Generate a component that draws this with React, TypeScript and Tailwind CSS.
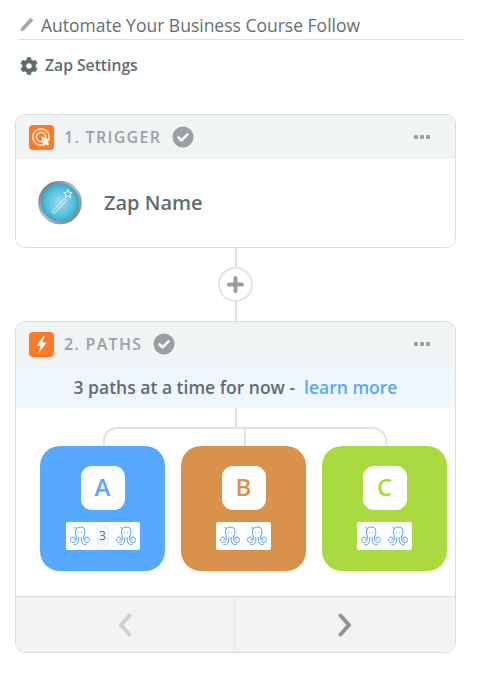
import React from 'react';
import { FaCog } from 'react-icons/fa';

const font = "font-['Open_Sans',sans-serif]";

function CheckBadge() {
  return (
    <svg width="22" height="22" viewBox="0 0 22 22" className="ml-[11px]">
      <circle cx="11" cy="11" r="10.5" fill="#9a9fa2" />
      <path d="M6.5 11.5l3 2.8 6-6" fill="none" stroke="#fff" strokeWidth="2.6" strokeLinecap="round" strokeLinejoin="round" />
    </svg>
  );
}

function Dots() {
  return (
    <div className="ml-auto mr-[25px] flex gap-[2px]">
      <span className="h-[4px] w-[4px] rounded-[1px] bg-[#9a9fa2]" />
      <span className="h-[4px] w-[4px] rounded-[1px] bg-[#9a9fa2]" />
      <span className="h-[4px] w-[4px] rounded-[1px] bg-[#9a9fa2]" />
    </div>
  );
}

function TriggerIcon() {
  return (
    <svg width="25" height="25" viewBox="0 0 25 25">
      <rect width="25" height="25" rx="4" fill="#ff7a26" />
      <circle cx="12" cy="12" r="8.2" fill="none" stroke="#ffd9bf" strokeWidth="1.7" />
      <circle cx="12" cy="12" r="4.6" fill="none" stroke="#ffe6d5" strokeWidth="1.7" />
      <path d="M12.2 11.2l8.6 3.6-3.5 1.3 3.2 3.2-1.6 1.6-3.2-3.2-1.3 3.5z" fill="#fff" />
    </svg>
  );
}

function BoltIcon() {
  return (
    <svg width="25" height="25" viewBox="0 0 25 25">
      <rect width="25" height="25" rx="4" fill="#ff7a26" />
      <path d="M14.6 3.8L7.6 14h4l-2.2 7.4L17.6 10.4h-4.2l2.2-6.6z" fill="#fff" />
    </svg>
  );
}

function WandBadge() {
  return (
    <svg width="46" height="46" viewBox="0 0 46 46">
      <defs>
        <radialGradient id="wandFill" cx="50%" cy="50%" r="52%">
          <stop offset="0%" stopColor="#9adfee" />
          <stop offset="65%" stopColor="#55bedb" />
          <stop offset="100%" stopColor="#2a9dc4" />
        </radialGradient>
        <linearGradient id="wandRing" x1="0" y1="0" x2="1" y2="1">
          <stop offset="0%" stopColor="#6a6a6a" />
          <stop offset="50%" stopColor="#c2c2c2" />
          <stop offset="100%" stopColor="#777" />
        </linearGradient>
      </defs>
      <circle cx="23" cy="22.5" r="20.5" fill="url(#wandFill)" stroke="url(#wandRing)" strokeWidth="2.6" />
      <path d="M31 9.5l1.1 3 3.1.3-2.4 2 .8 3.1-2.7-1.7-2.7 1.6.8-3-2.3-2.1 3.1-.2z" fill="none" stroke="#eaf9fd" strokeWidth="1" />
      <path d="M27.5 18.5L15 31.5l2 2 12.5-13z" fill="none" stroke="#eaf9fd" strokeWidth="1" />
    </svg>
  );
}

function Octopus() {
  return (
    <svg width="20" height="20" viewBox="0 0 20 20" fill="none" stroke="#4a9ff5" strokeWidth="1" strokeLinecap="round">
      <path d="M6.2 10.3C5 8.3 5.2 3 7.2 1.8c1.8-1 4.800-1 6.400 0 1.800 1.200 1.600 6.400.2 8.500" />
      <path d="M6.4 2.4L4.8 1.400" />
      <circle cx="8.4" cy="6.600" r=".6" fill="#4a9ff5" stroke="none" />
      <circle cx="11.8" cy="6.600" r=".6" fill="#4a9ff5" stroke="none" />
      <path d="M6.2 10.300c.5 3 0 6.200-2.700 6.200C1.500 16.500.5 15 .5 13.500.5 12 1.700 11 3 11c1.200 0 2 .8 2 1.800 0 .9-.7 1.400-1.400 1.200" />
      <path d="M13.800 10.300c-.5 3 0 6.200 2.700 6.200 2 0 3-1.500 3-3 0-1.500-1.200-2.500-2.500-2.500-1.200 0-2 .8-2 1.800 0 .9.700 1.400 1.400 1.200" />
      <path d="M8.800 11.500c.4 3-.4 5.600-2.200 6.800-1 .6-2.200.6-3 0" />
      <path d="M11.200 11.500c-.4 3 .4 5.600 2.200 6.800 1 .6 2.200.6 3 0" />
    </svg>
  );
}

function PathCard({ letter, bg, text, count }: { letter: string; bg: string; text: string; count?: boolean }) {
  return (
    <div className={`flex h-[125px] w-[125px] shrink-0 flex-col items-center rounded-[20px] pt-[20px] ${bg}`}>
      <div className={`flex h-[44px] w-[44px] items-center justify-center rounded-[11px] bg-white pb-[2px] text-[24px] font-semibold ${text}`}>
        {letter}
      </div>
      <div className="mt-[12px] flex h-[28px] items-center gap-[7px] rounded-[2px] bg-white px-[4px]">
        <Octopus />
        {count && (
          <span className="flex h-[20px] w-[12px] items-center justify-center rounded-[2px] bg-[#f1f4f5] text-[12px] text-[#666e74]">3</span>
        )}
        <Octopus />
      </div>
    </div>
  );
}

function Chevron({ d, color }: { d: string; color: string }) {
  return (
    <svg width="14" height="24" viewBox="0 0 14 24">
      <path d={d} fill="none" stroke={color} strokeWidth="4" strokeLinecap="round" strokeLinejoin="round" />
    </svg>
  );
}

export default function App() {
  return (
    <div className={`h-[687px] w-[484px] overflow-hidden bg-white ${font}`}>
      <div className="ml-[19px] mr-[20px] flex h-[40px] items-center border-b border-[#dcdfe1] pt-[10px] text-[#666e74]">
        <svg width="14" height="15" viewBox="0 0 14 15" className="ml-px">
          <path d="M.5 14.500l.8-3.800L10.600.8l2.700 2.600-9.200 9.900z" fill="#a4a8ab" />
        </svg>
        <span className="ml-[7px] text-[17.5px] leading-[24px]">Automate Your Business Course Follow</span>
      </div>

      <div className="ml-[20px] mt-[14px] flex h-[24px] items-center text-[#5f6c72]">
        <FaCog size={18} color="#5f6c72" />
        <span className="ml-[7px] text-[15.7px] font-semibold">Zap Settings</span>
      </div>

      <div className="ml-[15px] mt-[36px] w-[441px]">
        <section className="h-[134px] overflow-hidden rounded-[10px] border border-[#d9dde0]">
          <div className="flex h-[44px] items-center bg-[#f1f4f5] pl-[13px]">
            <TriggerIcon />
            <span className="ml-[10px] text-[16px] font-semibold tracking-[1.3px] text-[#9aa1a6]">1. TRIGGER</span>
            <CheckBadge />
            <Dots />
          </div>
          <div className="flex h-[88px] items-center pl-[21px]">
            <WandBadge />
            <span className="ml-[21px] text-[20px] font-semibold text-[#5f6c72]">Zap Name</span>
          </div>
        </section>

        <div className="flex flex-col items-center">
          <div className="h-[19px] w-[2px] bg-[#dfe3e5]" />
          <div className="flex h-[35px] w-[35px] items-center justify-center rounded-full border-2 border-[#e1e4e6]">
            <svg width="17" height="17" viewBox="0 0 17 17">
              <path d="M8.5 2v13M2 8.500h13" stroke="#969da2" strokeWidth="4" strokeLinecap="round" />
            </svg>
          </div>
          <div className="h-[19px] w-[2px] bg-[#dfe3e5]" />
        </div>

        <section className="h-[332px] overflow-hidden rounded-[10px] border border-[#d9dde0]">
          <div className="flex h-[44px] items-center bg-[#f1f4f5] pl-[13px]">
            <BoltIcon />
            <span className="ml-[10px] text-[16px] font-semibold tracking-[1.3px] text-[#9aa1a6]">2. PATHS</span>
            <CheckBadge />
            <Dots />
          </div>
          <div className="flex h-[42px] items-center justify-center bg-[#eff6fd] text-[17.5px] font-semibold text-[#5f6c72]">
            3 paths at a time for now -<span className="ml-[9px] text-[#5aa9f6]">learn more</span>
          </div>

          <div className="flex h-[188px] flex-col">
            <div className="ml-[219px] h-[19px] w-[2px] bg-[#dfe3e5]" />
            <div className="ml-[87px] flex h-[19px] w-[284px] justify-center rounded-t-[14px] border-2 border-b-0 border-[#dfe3e5]">
              <div className="h-full w-[2px] bg-[#dfe3e5]" />
            </div>
            <div className="flex gap-[16px] pl-[24px]">
              <PathCard letter="A" bg="bg-[#57a9ff]" text="text-[#57a9ff]" count />
              <PathCard letter="B" bg="bg-[#d9924b]" text="text-[#d9924b]" />
              <PathCard letter="C" bg="bg-[#a9da3f]" text="text-[#a9da3f]" />
            </div>
          </div>

          <div className="flex h-[56px] border-t border-[#d9dde0] bg-[#f3f3f3]">
            <div className="flex w-[219px] items-center justify-center border-r border-[#e6e6e6]">
              <Chevron d="M11.5 2.500L3 12l8.500 9.500" color="#ccd0d2" />
            </div>
            <div className="flex flex-1 items-center justify-center">
              <Chevron d="M2.5 2.500L11 12l-8.500 9.500" color="#8e9498" />
            </div>
          </div>
        </section>
      </div>
    </div>
  );
}
